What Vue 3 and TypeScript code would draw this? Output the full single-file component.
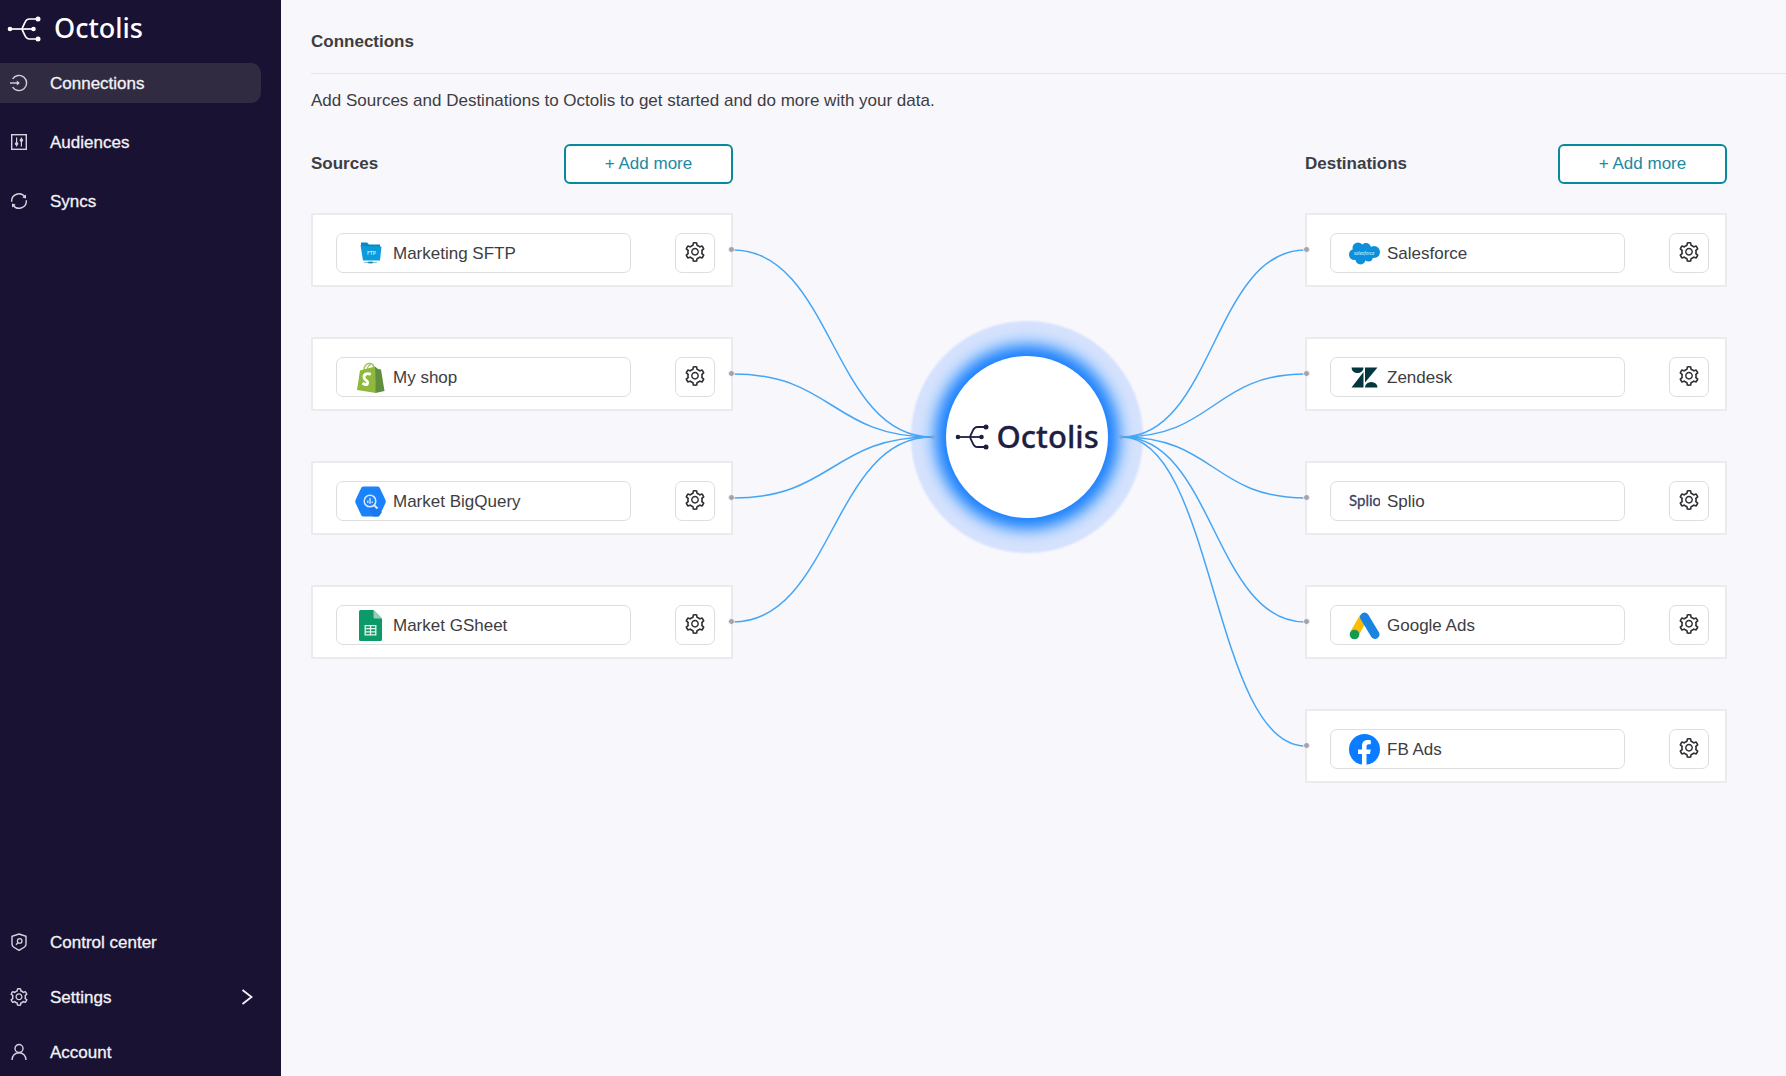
<script setup lang="ts">
interface Connector {
  id: string
  name: string
}

interface NavItem {
  id: string
  label: string
}

const mainNav: NavItem[] = [
  { id: 'connections', label: 'Connections' },
  { id: 'audiences', label: 'Audiences' },
  { id: 'syncs', label: 'Syncs' },
]

const footNav: NavItem[] = [
  { id: 'control', label: 'Control center' },
  { id: 'settings', label: 'Settings' },
  { id: 'account', label: 'Account' },
]

const sources: Connector[] = [
  { id: 'sftp', name: 'Marketing SFTP' },
  { id: 'shopify', name: 'My shop' },
  { id: 'bigquery', name: 'Market BigQuery' },
  { id: 'gsheet', name: 'Market GSheet' },
]

const destinations: Connector[] = [
  { id: 'salesforce', name: 'Salesforce' },
  { id: 'zendesk', name: 'Zendesk' },
  { id: 'splio', name: 'Splio' },
  { id: 'gads', name: 'Google Ads' },
  { id: 'facebook', name: 'FB Ads' },
]

const columns = [
  { key: 'sources', title: 'Sources', items: sources },
  { key: 'destinations', title: 'Destinations', items: destinations },
]

// Row geometry shared by the cards and the link curves.
const ROW_PITCH = 124
const ROW_CENTER = 37
const HUB_Y = 224

const rowY = (i: number): number => ROW_CENTER + i * ROW_PITCH
const inbound = (i: number): string =>
  `M0 ${rowY(i)} C100 ${rowY(i)} 100 ${HUB_Y} 200 ${HUB_Y}`
const outbound = (i: number): string =>
  `M0 ${HUB_Y} C100 ${HUB_Y} 100 ${rowY(i)} 200 ${rowY(i)}`

const gearPath =
  'M924.8 625.7l-65.5-56c3.1-19 4.7-38.4 4.7-57.8s-1.6-38.8-4.7-57.8l65.5-56a32.03 32.03 0 009.3-35.2l-.9-2.6a443.74 443.74 0 00-79.7-137.9l-1.8-2.1a32.12 32.12 0 00-35.1-9.5l-81.3 28.9c-30-24.6-63.5-44-99.7-57.6l-15.7-85a32.05 32.05 0 00-25.8-25.7l-2.7-.5c-52.1-9.4-106.9-9.4-159 0l-2.7.5a32.05 32.05 0 00-25.8 25.7l-15.8 85.4a351.86 351.86 0 00-99 57.4l-81.9-29.1a32 32 0 00-35.1 9.5l-1.8 2.1a446.02 446.02 0 00-79.7 137.9l-.9 2.6c-4.5 12.5-.8 26.5 9.3 35.2l66.3 56.6c-3.1 18.8-4.6 38-4.6 57.1 0 19.2 1.5 38.4 4.6 57.1L99 625.5a32.03 32.03 0 00-9.3 35.2l.9 2.6c18.1 50.4 44.9 96.9 79.7 137.9l1.8 2.1a32.12 32.12 0 0035.1 9.5l81.9-29.1c29.8 24.5 63.1 43.9 99 57.4l15.8 85.4a32.05 32.05 0 0025.8 25.7l2.7.5a449.4 449.4 0 00159 0l2.7-.5a32.05 32.05 0 0025.8-25.7l15.7-85a350 350 0 0099.7-57.6l81.3 28.9a32 32 0 0035.1-9.5l1.8-2.1c34.8-41.1 61.6-87.5 79.7-137.9l.9-2.6c4.5-12.3.8-26.3-9.3-35zM788.3 465.9c2.5 15.1 3.8 30.6 3.8 46.1s-1.3 31-3.8 46.1l-6.6 40.1 74.7 63.9a370.03 370.03 0 01-42.6 73.6L721 702.8l-31.4 25.8c-23.9 19.6-50.5 35-79.3 45.8l-38.1 14.3-17.9 97a377.5 377.5 0 01-85 0l-17.9-97.2-37.8-14.5c-28.5-10.8-55-26.2-78.7-45.7l-31.4-25.9-93.4 33.2c-17-22.9-31.2-47.6-42.6-73.6l75.5-64.5-6.5-40c-2.4-14.9-3.7-30.3-3.7-45.5 0-15.3 1.2-30.6 3.7-45.5l6.5-40-75.5-64.5c11.3-26.1 25.6-50.7 42.6-73.6l93.4 33.2 31.4-25.9c23.7-19.5 50.2-34.9 78.7-45.7l37.9-14.3 17.9-97.2c28.1-3.2 56.8-3.2 85 0l17.9 97 38.1 14.3c28.7 10.8 55.4 26.2 79.3 45.8l31.4 25.8 92.8-32.9c17 22.9 31.2 47.6 42.6 73.6L781.8 426l6.5 39.9zM512 326c-97.2 0-176 78.8-176 176s78.8 176 176 176 176-78.8 176-176-78.8-176-176-176zm79.2 255.2A111.6 111.6 0 01512 614c-29.9 0-58-11.7-79.2-32.8A111.6 111.6 0 01400 502c0-29.9 11.7-58 32.8-79.2C454 401.6 482.1 390 512 390c29.9 0 58 11.6 79.2 32.8A111.6 111.6 0 01624 502c0 29.9-11.7 58-32.8 79.2z'
</script>

<template>
  <div class="app">
    <aside class="sidebar">
      <a class="brand" href="#">
        <svg class="brand-mark" viewBox="0 0 34 26" aria-hidden="true">
          <g fill="none" stroke="currentColor" stroke-width="1.700">
            <path d="M3 13H27" />
            <path d="M31 3H22.500C19 3 18.500 5 17.500 7.500L15.500 11.500Q14.800 13 15.500 14.500L17.500 18.500C18.500 21 19 23 22.500 23H31" />
          </g>
          <g fill="currentColor">
            <circle cx="3" cy="13" r="2.300" /><circle cx="26.500" cy="13" r="2.300" />
            <circle cx="31" cy="3" r="2.500" /><circle cx="31" cy="23" r="2.500" />
          </g>
        </svg>
        <span class="brand-name">Octolis</span>
      </a>

      <nav class="nav" aria-label="Main">
        <a
          v-for="item in mainNav"
          :key="item.id"
          href="#"
          class="nav-item"
          :class="{ active: item.id === 'connections' }"
        >
          <svg class="nav-icon" viewBox="0 0 18 18" fill="none" stroke="currentColor" stroke-width="1.400" aria-hidden="true">
            <template v-if="item.id === 'connections'">
              <path d="M2.600 4.900A7.600 7.600 0 1 1 2.600 13.100" />
              <path d="M0 9H8.500" />
              <path d="M6.800 6.600L9.800 9L6.800 11.400Z" fill="currentColor" stroke="none" />
            </template>
            <template v-else-if="item.id === 'audiences'">
              <rect x="1.700" y="1.700" width="14.600" height="14.600" />
              <path d="M6.600 4.500V13.500M11.400 4.500V13.500" stroke-width="1.200" />
              <circle cx="6.600" cy="10.800" r="1.300" fill="currentColor" stroke-width="1" />
              <circle cx="11.400" cy="7.200" r="1.300" fill="currentColor" stroke-width="1" />
            </template>
            <template v-else>
              <path d="M1.700 9.800A7.300 7.300 0 0 1 15 5M16.300 8.200A7.300 7.300 0 0 1 3 13" />
              <path d="M16 2.600V6.600L12.300 5.600Z" fill="currentColor" stroke="none" />
              <path d="M2 15.400V11.400L5.700 12.400Z" fill="currentColor" stroke="none" />
            </template>
          </svg>
          <span class="label">{{ item.label }}</span>
        </a>
      </nav>

      <nav class="nav nav-foot" aria-label="Account">
        <a v-for="item in footNav" :key="item.id" href="#" class="nav-item">
          <svg v-if="item.id === 'settings'" class="nav-icon" viewBox="64 64 896 896" fill="currentColor" aria-hidden="true">
            <path :d="gearPath" />
          </svg>
          <svg v-else class="nav-icon" viewBox="0 0 18 18" fill="none" stroke="currentColor" stroke-width="1.400" aria-hidden="true">
            <template v-if="item.id === 'control'">
              <path d="M9 1L16 3.300V11.300Q16 12.800 14.500 14L9 17.400L3.500 14Q2 12.800 2 11.300V3.300Z" />
              <circle cx="9.700" cy="7.900" r="2.300" stroke-width="1.300" />
              <path d="M8 9.600L6 11.800" />
            </template>
            <template v-else>
              <circle cx="9" cy="5.500" r="4" />
              <path d="M2 17C2 12.800 5 9.700 9 9.700S16 12.800 16 17" />
            </template>
          </svg>
          <span class="label">{{ item.label }}</span>
          <svg v-if="item.id === 'settings'" class="chevron" viewBox="0 0 12 16" fill="none" stroke="currentColor" stroke-width="1.800" aria-hidden="true">
            <path d="M1.500 1L10.500 8L1.500 15" />
          </svg>
        </a>
      </nav>
    </aside>

    <main class="main">
      <header class="page-head">
        <h1>Connections</h1>
      </header>
      <p class="intro">Add Sources and Destinations to Octolis to get started and do more with your data.</p>

      <div class="flow">
        <section v-for="col in columns" :key="col.key" class="column" :class="col.key">
          <div class="column-head">
            <h2>{{ col.title }}</h2>
            <button type="button" class="add">+ Add more</button>
          </div>
          <ul class="cards">
            <li v-for="c in col.items" :key="c.id" class="card">
              <button type="button" class="connector">
                <svg class="logo" viewBox="0 0 31 31" aria-hidden="true">
                  <template v-if="c.id === 'sftp'">
                    <path d="M6 4.500H12L14 6.500H25V10H6Z" fill="#0a86c4" />
                    <path d="M5.500 7L12 8.500H26.500L25 22.500H8Z" fill="#0a9bdc" />
                    <text x="12" y="17" font-family="Lato, sans-serif" font-size="5" font-weight="700" fill="#c8ecfb">FTP</text>
                    <path d="M9 24.500H22" stroke="#8fbfd4" stroke-width="1" />
                    <ellipse cx="15.500" cy="24.500" rx="3" ry="1" fill="#2c87ad" />
                  </template>
                  <template v-else-if="c.id === 'shopify'">
                    <path d="M9 8C9 4 12 1 14.500 1.500C18 1.200 19 4 19 7" fill="none" stroke="#9dc45b" stroke-width="1.500" />
                    <path d="M12 8C12.500 4 14.500 2.500 16 3" fill="none" stroke="#9dc45b" stroke-width="1.200" />
                    <path d="M5 8.500L20 4.500L21 31L2 28Z" fill="#8fb83c" />
                    <path d="M20 4.500L23 7L26 7.500L29.500 29L20.500 31Z" fill="#5e8e3e" />
                    <path d="M15.800 12.500C12 10.500 8.500 12.500 9 15.500C9.500 18.500 13 18.500 12.700 21C12.300 23.500 9.500 22.800 7.500 21.200" fill="none" stroke="#fff" stroke-width="2.800" />
                  </template>
                  <template v-else-if="c.id === 'bigquery'">
                    <path d="M8.500 .5H22.500Q24 .5 24.700 1.700L30.500 14Q31 15.500 30.500 17L24.700 29.300Q24 30.500 22.500 30.500H8.500Q7 30.500 6.300 29.300L.5 17Q0 15.500 .5 14L6.300 1.700Q7 .5 8.500 .5Z" fill="#1a82fb" />
                    <path d="M20 20L27 26L24.700 29.300Q24 30.500 22.500 30.500H18L13 21Z" fill="#1a78ea" />
                    <circle cx="15" cy="15" r="5.800" fill="none" stroke="#d8e9ff" stroke-width="1.500" />
                    <path d="M12.800 14.500V17M15 12V18M17.200 15.500V17" stroke="#d8e9ff" stroke-width="1.300" />
                    <path d="M19.200 19.200L22.500 22.500" stroke="#d8e9ff" stroke-width="2" />
                  </template>
                  <template v-else-if="c.id === 'gsheet'">
                    <path d="M5.500 0H18.500L27 8.500V29.500Q27 31 25.500 31H5.500Q4 31 4 29.500V1.500Q4 0 5.500 0Z" fill="#0c9a68" />
                    <path d="M18.500 0L27 8.500H20Q18.500 8.500 18.500 7Z" fill="#8fd1b5" />
                    <path d="M10.200 15.700H20.800V24.800H10.200ZM10.200 18.700H20.800M10.200 21.800H20.800M15.500 15.700V24.800" fill="none" stroke="#e3f5ec" stroke-width="1.300" />
                  </template>
                  <template v-else-if="c.id === 'salesforce'">
                    <g fill="#0d8fdc">
                      <circle cx="9" cy="10" r="5.500" /><circle cx="17" cy="10" r="5" />
                      <circle cx="25" cy="14" r="6" /><circle cx="5.500" cy="16.500" r="5.500" />
                      <circle cx="11.500" cy="21.500" r="5" /><circle cx="19.500" cy="19" r="4.500" />
                      <path d="M6 11H24V19H8Z" />
                    </g>
                    <text x="5" y="16.500" font-family="Lato, sans-serif" font-size="5" font-style="italic" fill="#d3edfb">salesforce</text>
                  </template>
                  <g v-else-if="c.id === 'zendesk'" fill="#03363d">
                    <path d="M2.500 5.500H14.500A6 5.500 0 0 1 2.500 5.500Z" />
                    <path d="M14.500 10V25.500H2.500Z" />
                    <path d="M16 5.500H28.500L16 20.500Z" />
                    <path d="M16 25.500A6.200 5.500 0 0 1 28.500 25.500Z" />
                  </g>
                  <text v-else-if="c.id === 'splio'" x="0" y="20" font-family="Lato, sans-serif" font-size="15" stroke="#3b3f66" stroke-width="0.300" fill="#3b3f66">Splio</text>
                  <template v-else-if="c.id === 'gads'">
                    <path d="M15 7L5.500 23.500" stroke="#fbbc04" stroke-width="9" />
                    <path d="M15.500 7L26 24.500" stroke="#1a84e0" stroke-width="9" stroke-linecap="round" />
                    <circle cx="5.500" cy="24.500" r="4.800" fill="#169a4e" />
                  </template>
                  <template v-else>
                    <circle cx="15.500" cy="15.500" r="15.500" fill="#0a7cff" />
                    <path d="M13 31V20H9V15.500H13V12C13 8 15.300 6 18.800 6C20.300 6 21.800 6.300 21.800 6.300V10.200H19.800C18 10.200 17.500 11.300 17.500 12.500V15.500H21.700L21 20H17.500V31Z" fill="#fff" />
                  </template>
                </svg>
                <span class="label">{{ c.name }}</span>
              </button>
              <button type="button" class="config" :aria-label="`Configure ${c.name}`">
                <svg viewBox="64 64 896 896" fill="currentColor" aria-hidden="true"><path :d="gearPath" /></svg>
              </button>
            </li>
          </ul>
        </section>

        <div class="bridge">
          <svg class="links inbound" viewBox="0 0 200 570" preserveAspectRatio="none" aria-hidden="true">
            <path v-for="(s, i) in sources" :key="s.id" :d="inbound(i)" vector-effect="non-scaling-stroke" />
          </svg>
          <div class="hub">
            <div class="hub-core">
              <svg class="hub-mark" viewBox="0 0 34 26" aria-hidden="true">
                <g fill="none" stroke="currentColor" stroke-width="1.800">
                  <path d="M3 13H27" />
                  <path d="M31 3H22.500C19 3 18.500 5 17.500 7.500L15.500 11.500Q14.800 13 15.500 14.500L17.500 18.500C18.500 21 19 23 22.500 23H31" />
                </g>
                <g fill="currentColor">
                  <circle cx="3" cy="13" r="2.300" /><circle cx="26.500" cy="13" r="2.300" />
                  <circle cx="31" cy="3" r="2.500" /><circle cx="31" cy="23" r="2.500" />
                </g>
              </svg>
              <span class="hub-name">Octolis</span>
            </div>
          </div>
          <svg class="links outbound" viewBox="0 0 200 570" preserveAspectRatio="none" aria-hidden="true">
            <path v-for="(d, i) in destinations" :key="d.id" :d="outbound(i)" vector-effect="non-scaling-stroke" />
          </svg>
        </div>
      </div>
    </main>
  </div>
</template>

<style>
body {
  margin: 0;
  background: #f7f7fc;
}
</style>

<style scoped>
.app {
  display: flex;
  min-height: 100vh;
  font-family: 'Liberation Sans', Arial, sans-serif;
  font-size: 17px;
  line-height: 24px;
  color: #3d3d42;
  background: #f7f7fc;
}

.app *,
.app *::before,
.app *::after {
  box-sizing: border-box;
}

button {
  font: inherit;
  color: inherit;
  cursor: pointer;
}

.label {
  padding-top: 2px;
}

/* Sidebar */
.sidebar {
  flex: 0 0 281px;
  display: flex;
  flex-direction: column;
  padding-bottom: 4px;
  background: #191233;
  color: #f3f2f7;
}

.brand {
  display: flex;
  align-items: center;
  gap: 13px;
  height: 57px;
  padding-left: 7px;
  color: #fff;
  text-decoration: none;
}

.brand-mark {
  width: 34px;
  height: 26px;
}

.brand-name,
.hub-name {
  padding-bottom: 2px;
  font-family: 'Noto Sans', sans-serif;
  font-weight: 500;
}

.brand-name {
  font-size: 27px;
}

.nav {
  display: flex;
  flex-direction: column;
  gap: 19px;
  padding: 6px 20px 0 0;
}

.nav-foot {
  gap: 15px;
  margin-top: auto;
}

.nav-item {
  display: flex;
  align-items: center;
  height: 40px;
  padding: 0 8px 0 10px;
  border-radius: 0 10px 10px 0;
  color: inherit;
  text-decoration: none;
  -webkit-text-stroke: 0.3px currentColor;
}

.nav-item.active {
  background: #312b42;
}

.nav-icon {
  width: 18px;
  height: 18px;
  margin-right: 22px;
  color: #d6d3e0;
}

.chevron {
  width: 12px;
  height: 16px;
  margin-left: auto;
}

/* Page */
.main {
  flex: 1;
  min-width: 0;
  padding-left: 30px;
}

.page-head {
  padding: 30px 0 19px;
  border-bottom: 1px solid #e6e6ea;
}

h1,
h2 {
  margin: 0;
  font-size: 17px;
  line-height: 24px;
  font-weight: 700;
}

.intro {
  margin: 15px 0 31px;
}

.flow {
  display: grid;
  grid-template-columns: 422px minmax(260px, 1fr) 422px;
  padding-right: 59px;
}

.sources {
  grid-area: 1 / 1;
}

.bridge {
  grid-area: 1 / 2;
}

.destinations {
  grid-area: 1 / 3;
}

.column-head {
  display: flex;
  align-items: center;
  justify-content: space-between;
  margin-bottom: 29px;
}

.add {
  width: 169px;
  height: 40px;
  border: 2px solid #078a9c;
  border-radius: 6px;
  background: #fff;
  color: #2288a0;
}

.cards {
  display: flex;
  flex-direction: column;
  gap: 50px;
  margin: 0;
  padding: 0;
  list-style: none;
}

.card {
  position: relative;
  display: flex;
  justify-content: space-between;
  padding: 18px 16px 12px 23px;
  border: 2px solid #ebebee;
  background: #fff;
}

.card::after {
  content: '';
  position: absolute;
  z-index: 2;
  top: 50%;
  width: 7px;
  height: 7px;
  margin-top: -4px;
  border: 1px solid #f7f7fc;
  border-radius: 50%;
  background: #a3a3a8;
}

.sources .card::after {
  right: -4px;
}

.destinations .card::after {
  left: -4px;
}

.connector {
  display: flex;
  align-items: center;
  gap: 7px;
  width: 295px;
  height: 40px;
  padding: 0 18px;
  border: 1px solid #dedee1;
  border-radius: 7px;
  background: #fff;
  text-align: left;
}

.logo {
  flex: none;
  width: 31px;
  height: 31px;
}

.config {
  display: flex;
  justify-content: center;
  width: 40px;
  height: 40px;
  padding: 8px 0;
  border: 1px solid #dedee1;
  border-radius: 7px;
  background: #fff;
  color: #2f2f33;
}

.config svg {
  width: 20px;
  height: 20px;
}

/* Link curves and the hub between the two columns */
.bridge {
  display: flex;
  align-items: flex-start;
  padding-top: 69px;
}

.links {
  position: relative;
  z-index: 1;
  display: block;
  min-width: 0;
  height: 570px;
  overflow: visible;
}

.links path {
  fill: none;
  stroke: #45a5f5;
  stroke-width: 1.5px;
}

.inbound {
  flex: 13 1 0;
}

.outbound {
  flex: 12 1 0;
}

.hub {
  position: relative;
  flex: 0 0 190px;
  display: flex;
  align-items: center;
  justify-content: center;
  height: 448px;
}

.hub::before,
.hub::after {
  content: '';
  position: absolute;
  z-index: 2;
  top: 50%;
  width: 4px;
  height: 4px;
  margin-top: -2px;
  border-radius: 50%;
  background: #7fa6d6;
}

.hub::before {
  left: -1px;
}

.hub::after {
  right: -1px;
}

.hub-core {
  display: flex;
  align-items: center;
  justify-content: center;
  gap: 8px;
  width: 162px;
  height: 162px;
  border-radius: 50%;
  background: #fff;
  color: #1f1f42;
  box-shadow: 0 0 14px 10px #1b80fd, 0 0 14px 18px #b4d5fd, 0 0 2px 35px #d6e2fd;
}

.hub-mark {
  flex: none;
  width: 34px;
  height: 26px;
}

.hub-name {
  font-size: 31px;
  -webkit-text-stroke: 0.3px currentColor;
}
</style>
